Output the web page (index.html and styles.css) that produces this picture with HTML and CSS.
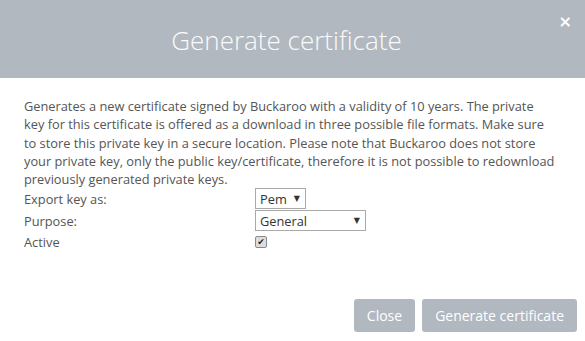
FILE: index.html
```html
<!DOCTYPE html>
<html lang="en">
<head>
    <meta charset="UTF-8">
    <meta name="viewport" content="width=device-width, initial-scale=1.0">
    <title>Generate certificate</title>
    <link rel="stylesheet" href="styles.css">
</head>
<body>
    <div class="modal">
        <div class="modal-header">
            <div class="modal-title">Generate certificate</div>
            <span class="close">&times;</span>
        </div>
        <div class="modal-body">
            <p class="intro">Generates a new certificate signed by Buckaroo with a validity of 10 years. The private<br>
                key for this certificate is offered as a download in three possible file formats. Make sure<br>
                to store this private key in a secure location. Please note that Buckaroo does not store<br>
                your private key, only the public key/certificate, therefore it is not possible to redownload<br>
                previously generated private keys.</p>
            <div class="form">
                <div class="row">
                    <label>Export key as:</label>
                    <div class="select small"><span>Pem</span><span class="arrow">&#9660;</span></div>
                </div>
                <div class="row">
                    <label>Purpose:</label>
                    <div class="select wide"><span>General</span><span class="arrow">&#9660;</span></div>
                </div>
                <div class="row">
                    <label>Active</label>
                    <span class="checkbox">&#10004;</span>
                </div>
            </div>
        </div>
        <div class="modal-footer">
            <button>Close</button>
            <button>Generate certificate</button>
        </div>
    </div>
</body>
</html>
```

FILE: styles.css
```css
body {
    margin: 0;
    background-color: white;
    font-family: "Open Sans", Arial, sans-serif;
    color: #555;
}
.modal {
    width: 585px;
    height: 341px;
    display: flex;
    flex-direction: column;
}
.modal-header {
    position: relative;
    height: 78px;
    padding-right: 12px;
    background-color: #b1b8bf;
    display: flex;
    align-items: center;
    justify-content: center;
}
.modal-title {
    color: #fafbfc;
    font-size: 26px;
    font-weight: 300;
    margin-top: 1px;
}
.close {
    position: absolute;
    right: 13px;
    top: 12px;
    color: white;
    font-size: 16px;
    font-weight: bold;
    font-family: "DejaVu Sans", sans-serif;
}
.modal-body {
    flex: 1;
    padding: 19px 8px 0 24px;
}
.intro {
    margin: 0;
    font-size: 12.8px;
    line-height: 18.3px;
    white-space: nowrap;
}
.form {
    font-size: 12.8px;
}
.row {
    display: flex;
    align-items: center;
}
.row label {
    width: 231px;
}
.select {
    box-sizing: border-box;
    height: 21px;
    border: 1px solid #a9a9a9;
    display: flex;
    align-items: center;
    justify-content: space-between;
    padding: 0 5px 0 4px;
    color: #333;
    margin: 0 0 1px 0;
}
.select.small {
    width: 51px;
}
.select.wide {
    width: 111px;
}
.arrow {
    font-size: 8px;
    font-family: "DejaVu Sans", sans-serif;
    color: #333;
}
.checkbox {
    box-sizing: border-box;
    width: 12px;
    height: 12px;
    margin: 4px 0 3px 0;
    border: 1px solid #8a8a8a;
    border-radius: 2px;
    background-color: #ddd;
    color: #222;
    font-size: 9px;
    line-height: 10px;
    text-align: center;
    font-family: "DejaVu Sans", sans-serif;
}
.modal-footer {
    display: flex;
    justify-content: flex-end;
    gap: 7px;
    padding: 0 8px 9px 0;
}
button {
    height: 33px;
    padding: 0 13px;
    border: none;
    border-radius: 3px;
    background-color: #b1b8bf;
    color: white;
    font-family: "Open Sans", Arial, sans-serif;
    font-size: 14px;
}
```
